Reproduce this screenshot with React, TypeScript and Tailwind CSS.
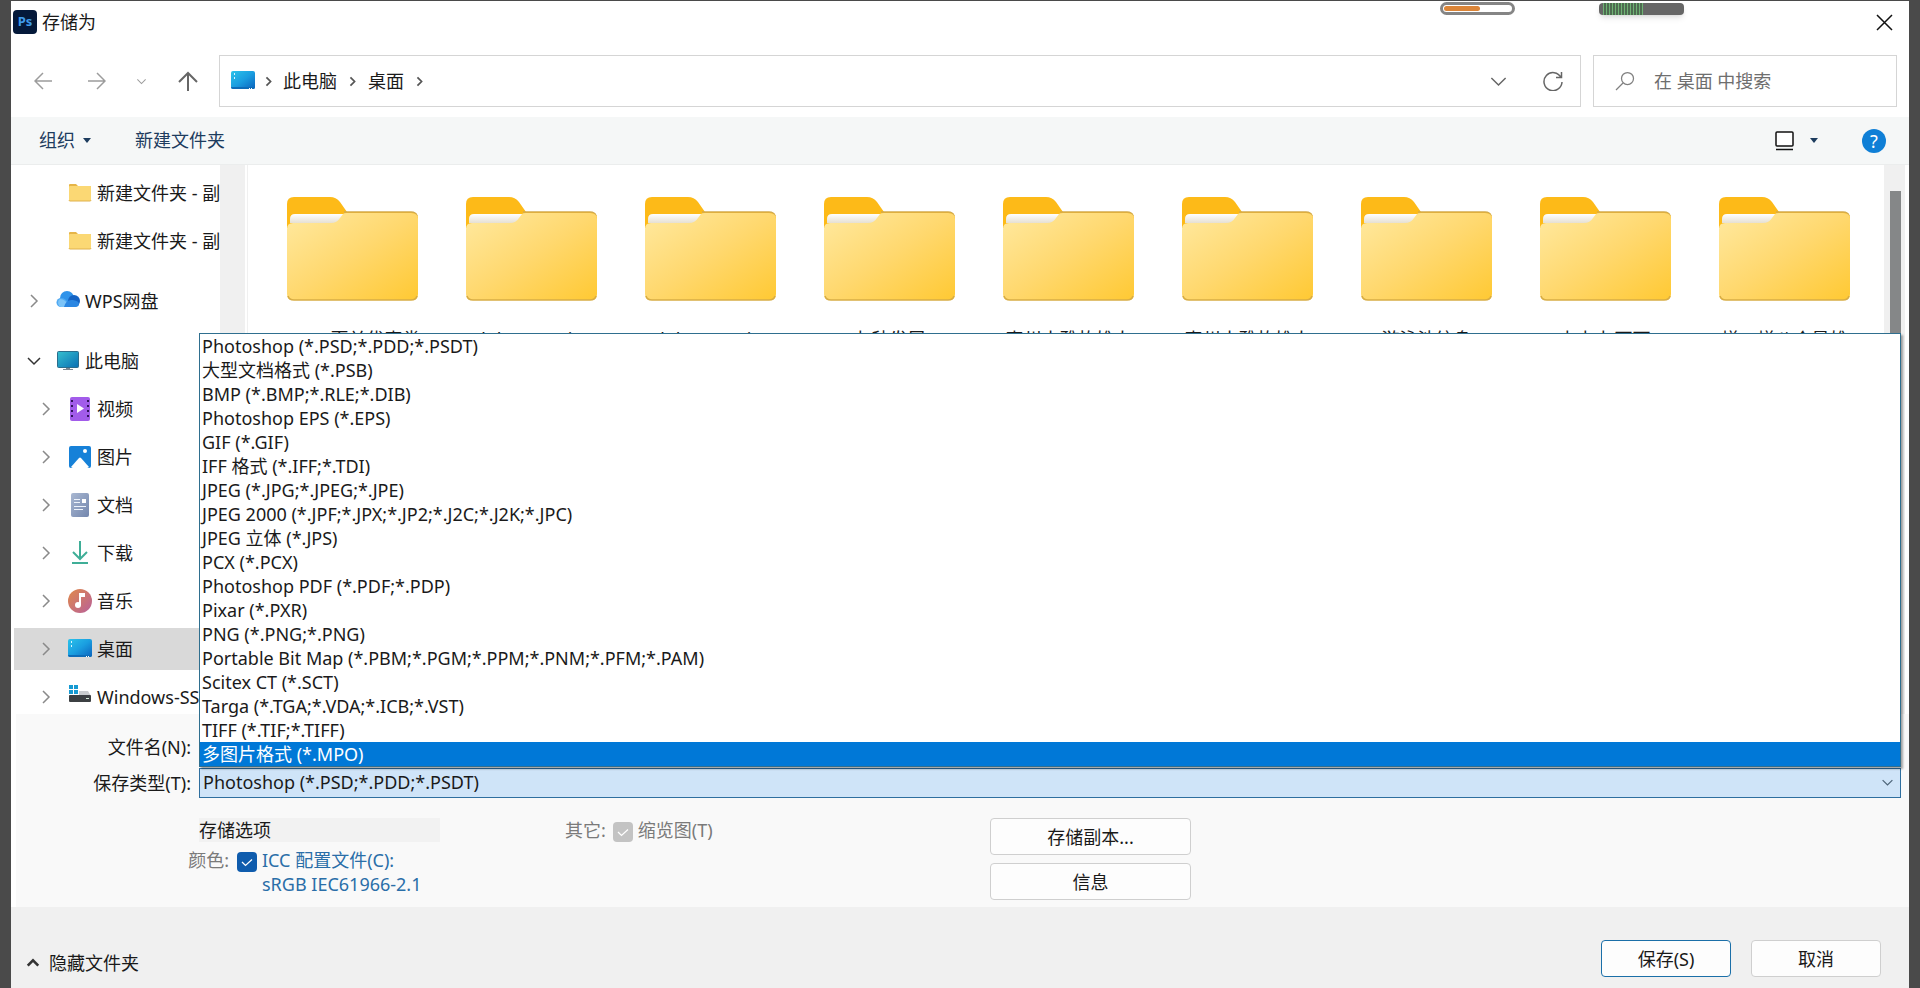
import { useState } from 'react';
import type { ReactNode } from 'react';

const formats = [
  'Photoshop (*.PSD;*.PDD;*.PSDT)',
  '大型文档格式 (*.PSB)',
  'BMP (*.BMP;*.RLE;*.DIB)',
  'Photoshop EPS (*.EPS)',
  'GIF (*.GIF)',
  'IFF 格式 (*.IFF;*.TDI)',
  'JPEG (*.JPG;*.JPEG;*.JPE)',
  'JPEG 2000 (*.JPF;*.JPX;*.JP2;*.J2C;*.J2K;*.JPC)',
  'JPEG 立体 (*.JPS)',
  'PCX (*.PCX)',
  'Photoshop PDF (*.PDF;*.PDP)',
  'Pixar (*.PXR)',
  'PNG (*.PNG;*.PNG)',
  'Portable Bit Map (*.PBM;*.PGM;*.PPM;*.PNM;*.PFM;*.PAM)',
  'Scitex CT (*.SCT)',
  'Targa (*.TGA;*.VDA;*.ICB;*.VST)',
  'TIFF (*.TIF;*.TIFF)',
  '多图片格式 (*.MPO)',
];

const folders = [
  '24.15页关优惠类',
  'Adobe Premiere',
  'Adobe Premiere',
  '七秒发展',
  '惠州小雅故雄人',
  '惠州小雅故雄人',
  '游泳池纹身',
  '七七七下雨',
  '增一增八个景雄',
];

type ChevronProps = { dir: 'right' | 'down' | 'up'; size: number; className?: string; width?: number };

function Chevron({ dir, size, className = '', width = 1.5 }: ChevronProps) {
  const d = { right: 'M5 2l6 6-6 6', down: 'M2 5l6 6 6-6', up: 'M2 11l6-6 6 6' }[dir];
  return (
    <svg width={size} height={size} viewBox="0 0 16 16" fill="none" stroke="currentColor" strokeWidth={width} className={`shrink-0 ${className}`}>
      <path d={d} />
    </svg>
  );
}

function Caret() {
  return (
    <svg width="8" height="5" viewBox="0 0 8 5" fill="currentColor">
      <path d="M0 0h8L4 5z" />
    </svg>
  );
}

function BigFolder() {
  return (
    <svg width="131" height="104" viewBox="0 0 131 104" className="block">
      <defs>
        <linearGradient id="folderFront" x1="0" y1="0" x2="1" y2="1">
          <stop offset="0" stopColor="#ffe9a0" />
          <stop offset="0.5" stopColor="#ffd86e" />
          <stop offset="1" stopColor="#ffc933" />
        </linearGradient>
        <linearGradient id="folderPaper" x1="0" y1="0" x2="0" y2="1">
          <stop offset="0" stopColor="#ffffff" />
          <stop offset="1" stopColor="#e6e0d2" />
        </linearGradient>
      </defs>
      <path d="M0 7q0-7 7-7h36q6 0 10 5l7 10h64q7 0 7 6v10H0z" fill="#fdba18" />
      <path d="M57 15h67q5 0 6 4" fill="none" stroke="#d3ab4c" strokeWidth="1.5" />
      <path d="M3 22q0-5 5-5h52l-6 9H3z" fill="url(#folderPaper)" />
      <path d="M0 32q0-6 6-6h38q6 0 9-5l3-4q1-1 4-1h64q7 0 7 6v75q0 6-6 6H6q-6 0-6-6z" fill="url(#folderFront)" />
      <path d="M1 99q1 4 6 4h117q5 0 6-4" fill="none" stroke="#d8ad45" strokeWidth="1.5" />
    </svg>
  );
}

function SmallFolderIcon() {
  return (
    <svg width="24" height="24" viewBox="0 0 24 24">
      <path d="M1 4q0-1 1-1h6l2 2h12q1 0 1 1v3H1z" fill="#e6b548" />
      <rect x="1" y="5" width="22" height="15" rx="1" fill="#fbd874" />
      <path d="M1 19q0 1 1 1h20q1 0 1-1" fill="none" stroke="#e0b24c" />
    </svg>
  );
}

function CloudIcon() {
  return (
    <svg width="24" height="24" viewBox="0 0 24 24">
      <circle cx="11" cy="9" r="7" fill="#2f93ea" />
      <circle cx="18" cy="12" r="6" fill="#1463c4" />
      <path d="M5 18a4.500 4.500 0 0 1 0-9q3 0 5 2l6 7z" fill="#4fa9f2" />
      <path d="M5 18a4.500 4.500 0 0 1-1-8q6 0 9 8z" fill="#7cc4f8" />
      <path d="M8 18q2-8 9-7 6 1 6 4 0 3-4 3z" fill="#2a86e2" />
    </svg>
  );
}

function MonitorIcon() {
  return (
    <svg width="24" height="24" viewBox="0 0 24 24">
      <defs>
        <linearGradient id="screen" x1="0" y1="0" x2="1" y2="1">
          <stop offset="0" stopColor="#35c0cf" />
          <stop offset="1" stopColor="#0a6fb4" />
        </linearGradient>
      </defs>
      <rect x="1.500" y="2.500" width="21" height="16" rx="1" fill="url(#screen)" stroke="#2b6d8c" />
      <path d="M10 19h4v1h3v1H7v-1h3z" fill="#7c8790" />
    </svg>
  );
}

function DesktopIcon() {
  return (
    <svg width="24" height="24" viewBox="0 0 24 24">
      <defs>
        <linearGradient id="desktop" x1="0" y1="0" x2="1" y2="1">
          <stop offset="0" stopColor="#2cc3ea" />
          <stop offset="0.5" stopColor="#1a9ee0" />
          <stop offset="1" stopColor="#0b62bd" />
        </linearGradient>
      </defs>
      <rect x="0" y="2" width="24" height="18" rx="2" fill="url(#desktop)" />
      <path d="M3 4h1v2H3zM3 8h1v2H3z" fill="#d9f4ff" />
      <path d="M0 18h24q0 2-2 2H2q-2 0-2-2z" fill="#0d6cb8" />
      <path d="M18 19h1v1h-1zM20 19h1v1h-1z" fill="#fff" />
    </svg>
  );
}

function VideoIcon() {
  return (
    <svg width="24" height="24" viewBox="0 0 24 24">
      <rect x="2" y="0" width="20" height="24" rx="2" fill="#a25cea" />
      <path d="M3 3h2v2H3zM3 8h2v2H3zM3 13h2v2H3zM3 18h2v2H3zM19 3h2v2h-2zM19 8h2v2h-2zM19 13h2v2h-2zM19 18h2v2h-2z" fill="#30125c" />
      <path d="M9 7v9l7-4.500z" fill="#fff" />
    </svg>
  );
}

function PictureIcon() {
  return (
    <svg width="24" height="24" viewBox="0 0 24 24">
      <rect x="1" y="1" width="22" height="22" rx="2" fill="#1681d8" />
      <path d="M3 22l8-9q1-1 2 0l8 9q-1 1-2 1H5q-1 0-2-1z" fill="#fff" />
      <circle cx="17" cy="6" r="2" fill="#fff" />
    </svg>
  );
}

function DocumentIcon() {
  return (
    <svg width="24" height="24" viewBox="0 0 24 24">
      <defs>
        <linearGradient id="doc" x1="0" y1="0" x2="1" y2="1">
          <stop offset="0" stopColor="#a9b8d2" />
          <stop offset="1" stopColor="#7386ad" />
        </linearGradient>
      </defs>
      <rect x="3" y="0" width="18" height="24" rx="2" fill="url(#doc)" />
      <path d="M6 6.500h6M6 9.500h6M6 13.500h12M6 16.500h9" stroke="#eef3fb" />
      <rect x="14" y="6" width="4" height="4" fill="#fff" />
    </svg>
  );
}

function DownloadIcon() {
  return (
    <svg width="24" height="24" viewBox="0 0 24 24" fill="none" stroke="#3fae97" strokeWidth="2">
      <path d="M12 0v18M5 11l7 7 7-7M4 22h16" />
    </svg>
  );
}

function MusicIcon() {
  return (
    <svg width="24" height="24" viewBox="0 0 24 24">
      <defs>
        <linearGradient id="music" x1="0" y1="0" x2="1" y2="1">
          <stop offset="0" stopColor="#e08a4a" />
          <stop offset="1" stopColor="#b8609a" />
        </linearGradient>
      </defs>
      <circle cx="12" cy="12" r="12" fill="url(#music)" />
      <circle cx="10" cy="16" r="3" fill="#fff" />
      <path d="M11 16V4h6v4h-4v8z" fill="#fff" />
    </svg>
  );
}

function DriveIcon() {
  return (
    <svg width="24" height="24" viewBox="0 0 24 24">
      <path d="M1 0h4v4H1zM6 0h4v4H6zM1 5h4v4H1zM6 5h4v4H6z" fill="#169ad2" />
      <path d="M11 6h9l3 5H1v-1h10z" fill="#c9cccf" />
      <rect x="1" y="10" width="22" height="7" rx="1" fill="#3c4043" />
      <rect x="18" y="13" width="3" height="1" fill="#d5ecd9" />
    </svg>
  );
}

type TreeItem = {
  label: string;
  icon: ReactNode;
  level: 1 | 2;
  arrow?: 'right' | 'down';
  spaced?: boolean;
  selected?: boolean;
};

const tree: TreeItem[] = [
  { label: '新建文件夹 - 副本', icon: <SmallFolderIcon />, level: 2 },
  { label: '新建文件夹 - 副本', icon: <SmallFolderIcon />, level: 2 },
  { label: 'WPS网盘', icon: <CloudIcon />, level: 1, arrow: 'right', spaced: true },
  { label: '此电脑', icon: <MonitorIcon />, level: 1, arrow: 'down', spaced: true },
  { label: '视频', icon: <VideoIcon />, level: 2, arrow: 'right' },
  { label: '图片', icon: <PictureIcon />, level: 2, arrow: 'right' },
  { label: '文档', icon: <DocumentIcon />, level: 2, arrow: 'right' },
  { label: '下载', icon: <DownloadIcon />, level: 2, arrow: 'right' },
  { label: '音乐', icon: <MusicIcon />, level: 2, arrow: 'right' },
  { label: '桌面', icon: <DesktopIcon />, level: 2, arrow: 'right', selected: true },
  { label: 'Windows-SSD (C:)', icon: <DriveIcon />, level: 2, arrow: 'right' },
];

function TitleBar() {
  return (
    <header className="flex h-[54px] shrink-0 items-start justify-between pl-[2px] pr-4">
      <div className="flex items-center gap-[5px] pt-[9px]">
        <svg width="24" height="24" viewBox="0 0 24 24">
          <rect width="24" height="24" rx="4" fill="#04193a" />
          <text x="12" y="16" textAnchor="middle" fontSize="13" fontWeight="700" fill="#3f9bea" fontFamily="Noto Sans, sans-serif">Ps</text>
        </svg>
        <h1 className="text-[18px] leading-6">存储为</h1>
      </div>
      <div className="flex items-start">
        {/* battery widgets that hang over the top edge */}
        <div className="mr-[84px] mt-px h-[13px] w-[75px] rounded-full border-[3px] border-[#858585] bg-white p-px">
          <div className="h-[5px] w-9 rounded-full bg-[#db8538]" />
        </div>
        <div className="mr-[192px] mt-[2px] h-3 w-[85px] overflow-hidden rounded bg-[#666] pl-1 shadow-md">
          <div className="h-full w-10 bg-[repeating-linear-gradient(90deg,#6fb274_0_1px,#4d6b50_1px_3px)]" />
        </div>
        <button aria-label="关闭" className="mt-[13px]">
          <svg width="17" height="17" viewBox="0 0 17 17" stroke="#111" strokeWidth="1.500">
            <path d="M1 1l15 15M16 1L1 16" />
          </svg>
        </button>
      </div>
    </header>
  );
}

function NavBar() {
  return (
    <nav className="flex h-[52px] shrink-0 items-stretch pr-3">
      <div className="flex w-[208px] shrink-0 items-center pl-[23px] text-[#9c9c9c]">
        <button aria-label="后退" className="mr-9">
          <svg width="18" height="18" viewBox="0 0 18 18" fill="none" stroke="currentColor" strokeWidth="1.500">
            <path d="M18 9H1M9 1L1 9l8 8" />
          </svg>
        </button>
        <button aria-label="前进" className="mr-[30px]">
          <svg width="18" height="18" viewBox="0 0 18 18" fill="none" stroke="currentColor" strokeWidth="1.500">
            <path d="M0 9h17M9 1l8 8-8 8" />
          </svg>
        </button>
        <button aria-label="最近位置" className="mr-[31px]">
          <Chevron dir="down" size={11} />
        </button>
        <button aria-label="上移" className="text-[#666]">
          <svg width="20" height="20" viewBox="0 0 20 20" fill="none" stroke="currentColor" strokeWidth="2">
            <path d="M10 20V2M1 11l9-9 9 9" />
          </svg>
        </button>
      </div>
      <div className="flex flex-1 items-center border border-[#d5d5d5] pl-[11px] pr-[17px] text-[18px]">
        <DesktopIcon />
        <Chevron dir="right" size={11} width={2.5} className="mx-2 text-[#555]" />
        <a href="#pc" className="ml-px">此电脑</a>
        <Chevron dir="right" size={11} width={2.5} className="mx-[10px] text-[#555]" />
        <a href="#desktop">桌面</a>
        <Chevron dir="right" size={11} width={2.5} className="ml-[10px] text-[#555]" />
        <button aria-label="展开地址" className="ml-auto mr-[35px] text-[#666]">
          <Chevron dir="down" size={19} width={1.25} />
        </button>
        <button aria-label="刷新" className="text-[#666]">
          <svg width="20" height="20" viewBox="0 0 20 20" fill="none" stroke="currentColor" strokeWidth="1.500">
            <path d="M18 6.500A9 9 0 1 0 19 11M18.500 1v5.500H13" />
          </svg>
        </button>
      </div>
      <label className="ml-3 flex w-[304px] items-center border border-[#d5d5d5] pl-[21px]">
        <svg width="20" height="20" viewBox="0 0 20 20" fill="none" stroke="#808080" strokeWidth="1.250" className="shrink-0">
          <circle cx="12.500" cy="7.500" r="6" />
          <path d="M8 12l-7 7" />
        </svg>
        <input
          type="text"
          aria-label="搜索"
          placeholder="在 桌面 中搜索"
          className="ml-[19px] w-full min-w-0 text-[18px] outline-none placeholder:text-[#6e6e6e]"
        />
      </label>
    </nav>
  );
}

function CommandBar() {
  return (
    <div className="mt-[10px] flex h-12 shrink-0 items-center border-b border-[#ebeded] bg-[#f5f7f7] pl-7 pr-[23px] text-[18px] text-[#1d3c5e]">
      <button className="flex items-center gap-2">
        组织
        <Caret />
      </button>
      <button className="ml-11">新建文件夹</button>
      <button className="ml-auto flex items-center gap-4" aria-label="更改视图">
        <svg width="20" height="20" viewBox="0 0 20 20" fill="none" stroke="#111" strokeWidth="1.500">
          <rect x="2" y="1" width="17" height="14" rx="1" fill="#fff" />
          <path d="M2 18.500h17" />
        </svg>
        <Caret />
      </button>
      <button aria-label="帮助" className="ml-11 flex h-6 w-6 items-center justify-center rounded-full bg-[#0f7fd6] text-[18px] leading-6 text-white">
        ?
      </button>
    </div>
  );
}

function Sidebar() {
  return (
    <aside className="flex w-[234px] shrink-0">
      <ul className="w-[209px] shrink-0 overflow-hidden pt-1 text-[18px]">
        {tree.map((item, i) => (
          <li key={i} className={`flex h-12 items-center pl-[3px] ${item.spaced ? 'mt-3' : ''}`}>
            <a
              href="#folder"
              className={`flex h-[42px] w-full items-center overflow-hidden whitespace-nowrap ${
                item.level === 1 ? 'pl-3' : 'pl-6'
              } ${item.selected ? 'bg-[#d9d9d9]' : ''}`}
            >
              <span className="flex w-[30px] shrink-0">
                {item.arrow && (
                  <Chevron
                    dir={item.arrow}
                    size={16}
                    className={item.arrow === 'down' ? 'text-[#333]' : 'text-[#8a8a8a]'}
                  />
                )}
              </span>
              <span className="shrink-0">{item.icon}</span>
              <span className="ml-[5px]">{item.label}</span>
            </a>
          </li>
        ))}
      </ul>
      <div className="w-[25px] bg-[#f0f0f0]" />
    </aside>
  );
}

function FileArea() {
  return (
    <main className="ml-[2px] flex min-w-0 flex-1 border-l border-[#f0f0f0]">
      <div className="flex flex-1 content-start overflow-hidden pl-[15px] pt-8">
        {folders.map((name, i) => (
          <a href="#folder" key={i} className="flex w-[179px] shrink-0 flex-col items-center">
            <BigFolder />
            <span className="mt-6 text-[18px] leading-7">{name}</span>
          </a>
        ))}
      </div>
      <div className="flex w-[21px] justify-center bg-[#f0f0f0] pl-[2px] pt-[26px]">
        <div className="h-[420px] w-[11px] bg-[#858788]" />
      </div>
    </main>
  );
}

type CheckProps = { id: string; checked: boolean; disabled?: boolean; onChange?: () => void };

function Check({ id, checked, disabled, onChange }: CheckProps) {
  return (
    <span className="relative flex h-5 w-5 shrink-0">
      <input
        id={id}
        type="checkbox"
        checked={checked}
        disabled={disabled}
        onChange={onChange ?? (() => {})}
        className="h-5 w-5 shrink-0 appearance-none rounded border border-[#8a8a8a] checked:border-transparent checked:bg-[#0f5cad] disabled:checked:bg-[#c3c3c3]"
      />
      {checked && (
        <svg viewBox="0 0 20 20" className="pointer-events-none absolute inset-0" fill="none" stroke="#fff" strokeWidth="1.250">
          <path d="M5 10l3.500 3.500L15 7.500" />
        </svg>
      )}
    </span>
  );
}

const buttonBase = 'h-[37px] rounded border text-[18px] leading-6 bg-[#fdfdfd]';

export default function App() {
  const [format, setFormat] = useState(formats[0]);
  const [highlighted, setHighlighted] = useState(formats.length - 1);
  const [open, setOpen] = useState(true);
  const [useIcc, setUseIcc] = useState(true);

  const pick = (index: number) => {
    setFormat(formats[index]);
    setOpen(false);
  };

  return (
    <div className="h-screen overflow-hidden bg-[#4a4a4a] px-[11px] pt-px font-['Noto_Sans','Noto_Sans_CJK_SC',sans-serif] text-[#1a1a1a]">
      <div className="flex h-full flex-col bg-white">
        <TitleBar />
        <NavBar />
        <CommandBar />

        <div className="flex min-h-0 flex-1 overflow-hidden pr-1">
          <Sidebar />
          <FileArea />
        </div>

        <section className="ml-[5px] shrink-0 bg-[#f9f9f9] pb-[7px] pr-2 pt-[18px] text-[18px]">
          <div className="flex h-[30px] items-center">
            <label htmlFor="filename" className="w-[183px] pr-2 text-right">文件名(N):</label>
            <input id="filename" type="text" className="h-[30px] flex-1 border border-[#d0d0d0] bg-white px-1" />
          </div>
          <div className="mt-[6px] flex h-[30px] items-center">
            <label htmlFor="filetype" className="w-[183px] pr-2 text-right">保存类型(T):</label>
            <div className="relative h-full flex-1">
              <select
                id="filetype"
                value={format}
                onChange={(e) => setFormat(e.target.value)}
                onMouseDown={(e) => {
                  e.preventDefault();
                  setOpen(!open);
                }}
                className="h-full w-full appearance-none border border-[#2f6f9f] bg-[#cfe4f8] pb-[2px] pl-[3px] leading-6 outline-none"
              >
                {formats.map((f) => (
                  <option key={f}>{f}</option>
                ))}
              </select>
              <Chevron dir="down" size={13} className="pointer-events-none absolute right-[7px] top-2 text-[#4d6478]" />
              {open && (
                <ul
                  role="listbox"
                  aria-label="保存类型"
                  className="absolute bottom-full left-0 mb-px w-full border border-[#2f6f8f] bg-white shadow-[2px_2px_2px_rgba(0,0,0,0.35)]"
                >
                  {formats.map((f, i) => (
                    <li
                      key={f}
                      role="option"
                      aria-selected={i === highlighted}
                      onMouseEnter={() => setHighlighted(i)}
                      onClick={() => pick(i)}
                      className={`h-6 whitespace-nowrap pl-[2px] leading-6 ${
                        i === highlighted ? 'bg-[#0078d7] text-white' : ''
                      }`}
                    >
                      {f}
                    </li>
                  ))}
                </ul>
              )}
            </div>
          </div>

          <div className="mt-5 flex items-start leading-6">
            <div className="w-[549px] shrink-0">
              <h2 className="ml-[183px] w-[241px] bg-[#f2f2f2]">存储选项</h2>
              <div className="mt-[6px] flex items-start">
                <span className="w-[213px] shrink-0 text-right text-[#7a7a7a]">颜色:</span>
                <span className="ml-2 mt-1">
                  <Check id="icc" checked={useIcc} onChange={() => setUseIcc(!useIcc)} />
                </span>
                <label htmlFor="icc" className="ml-[5px] whitespace-nowrap text-[#2a6ea8]">
                  ICC 配置文件(C):
                  <br />
                  sRGB IEC61966-2.1
                </label>
              </div>
            </div>
            <div className="flex w-[425px] shrink-0 items-start text-[#7a7a7a]">
              <span>其它:</span>
              <span className="ml-[7px] mt-1">
                <Check id="thumb" checked disabled />
              </span>
              <label htmlFor="thumb" className="ml-[5px]">缩览图(T)</label>
            </div>
            <div className="flex w-[201px] flex-col gap-2">
              <button className={`${buttonBase} border-[#cfcfcf]`}>存储副本...</button>
              <button className={`${buttonBase} border-[#cfcfcf]`}>信息</button>
            </div>
          </div>
        </section>

        <footer className="flex h-[81px] shrink-0 items-start bg-[#f0f0f0] pl-[15px] pr-7 pt-[33px]">
          <button className="mt-[11px] flex items-center gap-[9px] text-[18px] leading-6">
            <Chevron dir="up" size={14} width={3} className="text-[#333]" />
            隐藏文件夹
          </button>
          <button className={`${buttonBase} ml-auto w-[130px] border-[#1b6fa8]`}>保存(S)</button>
          <button className={`${buttonBase} ml-5 w-[130px] border-[#cfcfcf]`}>取消</button>
        </footer>
      </div>
    </div>
  );
}
